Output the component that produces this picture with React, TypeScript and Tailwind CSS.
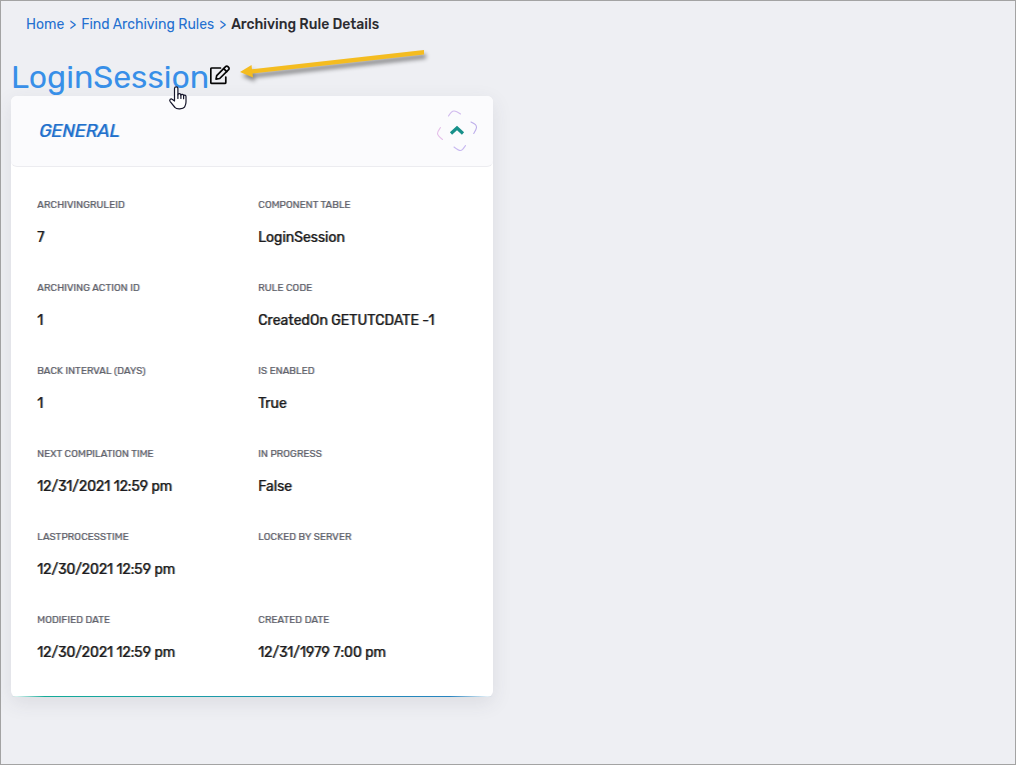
import { useState } from "react";

interface Field {
  label: string;
  value: string;
}

const fields: Field[] = [
  { label: "ArchivingRuleId", value: "7" },
  { label: "Component Table", value: "LoginSession" },
  { label: "Archiving Action ID", value: "1" },
  { label: "Rule Code", value: "CreatedOn GETUTCDATE -1" },
  { label: "Back Interval (Days)", value: "1" },
  { label: "Is Enabled", value: "True" },
  { label: "Next Compilation Time", value: "12/31/2021 12:59 pm" },
  { label: "In Progress", value: "False" },
  { label: "LastProcessTime", value: "12/30/2021 12:59 pm" },
  { label: "Locked By Server", value: "" },
  { label: "Modified Date", value: "12/30/2021 12:59 pm" },
  { label: "Created Date", value: "12/31/1979 7:00 pm" },
];

function Breadcrumb() {
  return (
    <nav aria-label="Breadcrumb" className="flex gap-[5px] pl-[15px] text-sm leading-5 text-[#2470d0]">
      <a href="#home">Home</a>
      <span>&gt;</span>
      <a href="#rules">Find Archiving Rules</a>
      <span>&gt;</span>
      <span className="font-medium text-[#2b2b30]">Archiving Rule Details</span>
    </nav>
  );
}

function EditIcon() {
  return (
    <svg className="h-5 w-5" viewBox="0 0 20 20" fill="none" stroke="#050505" strokeWidth="1.7" strokeLinejoin="round" strokeLinecap="round">
      <path d="M10.5 3H1.8a1 1 0 0 0-1 1v13.4a1 1 0 0 0 1 1h13a1 1 0 0 0 1-1V12" />
      <path d="M6 14.2l.7-3.6 8.9-8.9a1.6 1.6 0 0 1 2.3 0l.7.7a1.6 1.6 0 0 1 0 2.3l-8.9 8.8z" />
      <path d="M13.7 3.6l3 3" />
    </svg>
  );
}

function Pointer() {
  return (
    <svg className="absolute left-[157px] top-7 h-6 w-5" viewBox="0 0 20 24" fill="#fff" stroke="#15152a" strokeWidth="1.2" strokeLinejoin="round" strokeLinecap="round">
      <path d="M6.5 15V2.6a1.7 1.7 0 0 1 3.4 0V8.8c.1-1.5 2.8-1.5 3 .3.4-1.2 2.6-1 2.7.6.4-1 2.4-.8 2.4.9v5.5c0 2.8-1 4-1.5 5.1-1.3 1.9-8 2.3-9.5.3L2.2 15.6c-1.4-1.9.8-3.5 2.3-2z" />
      <path d="M9.9 8.8v3.7M12.9 9.1v3.4M15.6 9.8v2.9" />
    </svg>
  );
}

function CalloutArrow() {
  return (
    <svg
      className="absolute left-[229px] -top-2 h-10 w-[190px] drop-shadow-[2px_4px_2px_rgba(0,0,0,0.45)]"
      viewBox="0 0 190 40"
      fill="#f4bc20"
    >
      <path d="M0 22L11.5 15L12 19.3L184 0V4.5L12.5 23.5L13 27.5Z" />
    </svg>
  );
}

function GeneralCard() {
  const [open, setOpen] = useState(true);

  return (
    <section className="w-full max-w-[482px] rounded-md bg-white shadow-[0_6px_20px_rgba(60,60,80,0.10)]">
      <header className="flex items-center justify-between rounded-md border-b border-[#ececf0] bg-[#fbfbfd] pb-[14px] pl-7 pr-[14px] pt-3">
        <h2 className="pt-0.5 text-lg uppercase italic leading-6 text-[#2070cc] [text-shadow:1px_0_0_rgb(32_112_204/0.55)]">
          General
        </h2>
        <button type="button" aria-label="Toggle general" aria-expanded={open} onClick={() => setOpen(!open)}>
          <svg className="h-11 w-11" viewBox="0 0 44 44" fill="none" strokeWidth="1.1" strokeLinecap="round">
            <path stroke="#d0b9ee" d="M13.5 8C16 3.8 17 3 19 3c2 0 4 1.2 6.5 3" />
            <path stroke="#bdaeea" d="M36 14c4.5 2.2 5.5 3 5.5 5.5 0 1.5-1 3-2.800 6" />
            <path stroke="#e5bfe9" d="M5.5 19.5C3.8 22 2.5 23.5 2.5 25.5c0 2 1.5 3.3 5 6" />
            <path stroke="#c7b8f0" d="M19 39c3 2.4 4.5 3.5 6.5 3.5 1.8 0 3-2 5-5" />
            <path stroke="#17908a" strokeWidth="3.2" strokeLinecap="butt" d="M16 25.5l6-5.5 6 5.5" />
          </svg>
        </button>
      </header>
      {open && (
        <dl className="grid grid-cols-[221px_1fr] gap-y-8 px-[26px] pb-[33px] pt-[30px]">
          {fields.map((field) => (
            <div key={field.label} className="flex h-[51px] flex-col justify-between">
              <dt className="text-[10px] uppercase leading-4 text-[#5f626b] [text-shadow:1px_0_0_rgb(95_98_107/0.4)]">
                {field.label}
              </dt>
              <dd className="text-sm leading-5 text-[#1c1c20] [text-shadow:1px_0_0_rgb(28_28_32/0.5)]">
                {field.value}
              </dd>
            </div>
          ))}
        </dl>
      )}
      <div className="h-px bg-[linear-gradient(90deg,transparent,#14ab98_7%,#2784c0_91%,transparent)]" />
    </section>
  );
}

export default function App() {
  return (
    <main className="min-h-screen border border-[#a3a3a3] bg-[#eeeff3] px-[10px] py-[14px] font-['Rubik','Inter',sans-serif]">
      <Breadcrumb />
      <div className="relative mt-[23px] flex h-[38px] items-center gap-px">
        <h1 className="text-[32px] leading-[38px] text-[#388fe8]">LoginSession</h1>
        <button type="button" aria-label="Edit rule" className="pb-1">
          <EditIcon />
        </button>
        <CalloutArrow />
        {/* hovering over the title */}
        <div className="pointer-events-none absolute left-0 top-0 z-10">
          <Pointer />
        </div>
      </div>
      <GeneralCard />
    </main>
  );
}
